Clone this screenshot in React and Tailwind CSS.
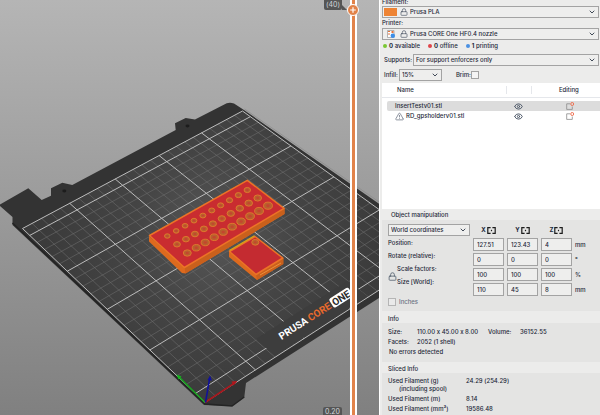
import React, { useState } from 'react';
import clsx from 'clsx';
import { ChevronDown, Eye, Lock, TriangleAlert } from 'lucide-react';

// Screen positions of the print surface corners, and its size in mm
const CORNERS = { p00: [205, 402.5], p10: [438, 252], p11: [242.5, 111], p01: [22.5, 228.5] };
const BED = { minX: 0, maxX: 250, minY: -10, maxY: 210 };

function makeProjection({ p00, p10, p11, p01 }) {
  const dx1 = p10[0] - p11[0], dx2 = p01[0] - p11[0], sx = p00[0] - p10[0] + p11[0] - p01[0];
  const dy1 = p10[1] - p11[1], dy2 = p01[1] - p11[1], sy = p00[1] - p10[1] + p11[1] - p01[1];
  const det = dx1 * dy2 - dx2 * dy1;
  const g = (sx * dy2 - dx2 * sy) / det;
  const h = (dx1 * sy - sx * dy1) / det;
  return (x, y) => {
    const u = (x - BED.minX) / (BED.maxX - BED.minX);
    const v = (y - BED.minY) / (BED.maxY - BED.minY);
    const w = g * u + h * v + 1;
    const px = ((p10[0] - p00[0] + g * p10[0]) * u + (p01[0] - p00[0] + h * p01[0]) * v + p00[0]) / w;
    const py = ((p10[1] - p00[1] + g * p10[1]) * u + (p01[1] - p00[1] + h * p01[1]) * v + p00[1]) / w;
    return `${px.toFixed(2)} ${py.toFixed(2)}`;
  };
}

const project = makeProjection(CORNERS);
const line = (x1, y1, x2, y2) => `M${project(x1, y1)}L${project(x2, y2)}`;
const quad = (x1, y1, x2, y2) =>
  `M${project(x1, y1)}L${project(x2, y1)}L${project(x2, y2)}L${project(x1, y2)}Z`;

let minorGrid = '';
let majorGrid = '';
for (let x = 10; x < 250; x += 10) {
  if (x % 50) minorGrid += line(x, -10, x, 210);
  else majorGrid += line(x, -10, x, 210);
}
for (let y = 0; y < 210; y += 10) {
  if (y % 50) minorGrid += line(0, y, 250, y);
  else majorGrid += line(0, y, 250, y);
}

const HOLE_ROWS = [
  { from: [167.3, 236], to: [247.3, 190], r: 2.8 },
  { from: [177, 244.3], to: [257.7, 198], r: 3.4 },
  { from: [187.3, 253], to: [268, 205.7], r: 4 },
];

const holes = HOLE_ROWS.flatMap(({ from, to, r }) =>
  Array.from({ length: 10 }, (_, i) => ({
    cx: from[0] + ((to[0] - from[0]) * i) / 9,
    cy: from[1] + ((to[1] - from[1]) * i) / 9,
    r: r + i * 0.05,
  }))
);

function Hole({ cx, cy, r }) {
  return (
    <g>
      <ellipse cx={cx} cy={cy} rx={r} ry={r * 0.8} fill="#b8602d" stroke="#e27a2e" strokeWidth="0.9" />
      <ellipse cx={cx} cy={cy} rx={r * 0.4} ry={r * 0.3} fill="#c4452e" />
    </g>
  );
}

function Scene() {
  return (
    <svg className="block h-full w-full" viewBox="0 0 379 415" preserveAspectRatio="xMinYMin slice">
      <defs>
        <linearGradient id="sky" x1="0" y1="0" x2="0" y2="1">
          <stop offset="0" stopColor="#b5b5b5" />
          <stop offset="1" stopColor="#808080" />
        </linearGradient>
        <radialGradient id="sheet" gradientUnits="userSpaceOnUse" cx="215" cy="235" r="170">
          <stop offset="0" stopColor="#575757" />
          <stop offset="0.5" stopColor="#444" />
          <stop offset="1" stopColor="#3b3b3b" />
        </radialGradient>
      </defs>
      <rect width="379" height="415" fill="url(#sky)" />

      {/* Heatbed body */}
      <path
        d="M0 204.5L28.3 188.3L41.7 200L51 195.7V188.3L62.3 182.7L72.3 185L175.7 130L175 123.3L185.7 118L195 119.5L226.7 103.3Q230 102 234 103.5L244 110L440 246V259L246 383L244.3 397L232 406L204 405L12.5 225V217L0 206Z"
        fill="#333"
      />
      <path d="M12.5 223L205 404L232 406L244.3 397" fill="none" stroke="#242424" strokeWidth="1.5" />
      <ellipse cx="64.3" cy="191" rx="2" ry="1.4" fill="#1c1c1c" />
      <ellipse cx="187.5" cy="126" rx="2" ry="1.4" fill="#1c1c1c" />
      <path d="M244.5 109L440 244" stroke="#8a8a8a" strokeWidth="0.7" />

      {/* Print surface */}
      <path d={quad(0, -10, 250, 210)} fill="url(#sheet)" />
      <path d={minorGrid} stroke="#6c6c6c" strokeWidth="0.6" fill="none" />
      <path d={majorGrid} stroke="#bcbcbc" strokeWidth="1" fill="none" />
      <path d={quad(71, -9, 170, 11)} fill="#3d3d3d" />
      <path d={quad(0, -10, 250, 210)} stroke="#bcbcbc" strokeWidth="1" fill="none" />

      <g transform="translate(281.5 340) rotate(-32.5)" fontFamily="Roboto, Arial, sans-serif" fontSize="10" fontWeight="700">
        <text x="0" y="0" fill="#fff">PRUSA</text>
        <text x="34.500" y="0" fill="#ea6a2c">CORE</text>
        <rect x="61.500" y="-9" width="23" height="10.5" rx="2" fill="#fff" />
        <text x="63" y="0" fill="#2b2b2b">ONE</text>
      </g>

      {/* Large part */}
      <path d="M149 236L184.500 267L284.500 208V214L185.500 273.500L182 273L149 241.500Z" fill="#dd6a1e" />
      <path d="M184.500 267L284.500 208V214L185.500 273.500Z" fill="#c9601c" />
      <path d="M149.500 235.500L247.300 180.300L284 208.300L184.400 267.500Z" fill="#c92c30" stroke="#ec7326" strokeWidth="1.500" strokeLinejoin="round" />
      {holes.map((hole, i) => (
        <Hole key={i} {...hole} />
      ))}

      {/* Small part */}
      <path d="M229 251.500L256 274.500L283.300 258V264L257 280L229 257Z" fill="#dd6a1e" />
      <path d="M256 274.500L283.300 258V264L257 280Z" fill="#c9601c" />
      <path d="M229.500 251.500L255 236.500L282.800 258L256 274.500Z" fill="#c42b31" stroke="#ec7326" strokeWidth="1.500" strokeLinejoin="round" />
      <path d="M229.500 250.500L254.500 235.700" stroke="#d9a514" strokeWidth="1.200" />
      <path d="M260 275L281 263" stroke="#ffae4d" strokeWidth="0.6" />
      <Hole cx={255.3} cy={242.3} r={3.6} />

      {/* Axes */}
      <g fill="none" strokeWidth="1.500">
        <path d="M205 402.500L179 377" stroke="#16a51d" />
        <path d="M205 402.500L234.500 383" stroke="#a8161c" />
        <path d="M205.500 402.500L209.500 379" stroke="#10109c" />
      </g>
      <path d="M176.500 374.500L181.500 376.500L178.500 379.500Z" fill="#12b51b" />
      <path d="M237.500 381L233.500 385.500L231.500 381.500Z" fill="#b0161c" />
      <path d="M210 375.500L212 380.500L207.500 380Z" fill="#10109c" />
    </svg>
  );
}

function LayerSlider() {
  const [layer, setLayer] = useState(40);
  return (
    <div className="absolute inset-y-0 right-[19px] w-[14px]">
      <div className="mx-auto h-full w-[7px] border-x-2 border-white bg-[#e2834a]" />
      <input
        type="range"
        aria-label="Layer"
        min="1"
        max="40"
        value={layer}
        onChange={e => setLayer(Number(e.target.value))}
        className="absolute inset-x-0 top-1 h-full w-full appearance-none bg-transparent [direction:rtl] [writing-mode:vertical-lr] [&::-webkit-slider-thumb]:size-3 [&::-webkit-slider-thumb]:appearance-none [&::-webkit-slider-thumb]:rounded-full [&::-webkit-slider-thumb]:border [&::-webkit-slider-thumb]:border-white [&::-webkit-slider-thumb]:bg-[#e2834a]"
      />
      <svg className="pointer-events-none absolute top-1 left-px size-3" viewBox="0 0 12 12">
        <path d="M6 3.200V8.800M3.200 6H8.800" stroke="#fff" strokeWidth="1.200" />
      </svg>
      <div className="absolute top-0 right-[18px] h-[10px] rounded-b-xs bg-[#555] px-[2px] text-[7px] leading-[10px] text-gray-300">
        (40)
      </div>
      <svg className="absolute top-[5px] right-[13px] h-[5px] w-[5px]" viewBox="0 0 5 5">
        <path d="M0 0L5 5H0Z" fill="#555" />
      </svg>
      <div className="absolute right-[18px] -bottom-[2px] h-[10px] rounded-xs bg-[#555] px-[2px] text-[7px] leading-[10px] text-gray-300">
        0.20
      </div>
    </div>
  );
}

function Dropdown({ id, label, value, icons, className }) {
  return (
    <div className={clsx('relative flex h-3 items-center border border-[#a3a3a3] bg-[#eeeeed]', className)}>
      {icons}
      <select id={id} aria-label={label} className="h-full min-w-0 flex-1 appearance-none bg-transparent pr-3 pl-[2px] outline-none">
        <option>{value}</option>
      </select>
      <ChevronDown className="pointer-events-none absolute right-[2px] size-2" strokeWidth={2.5} />
    </div>
  );
}

function PrinterIcon() {
  return (
    <svg className="ml-1 size-2 shrink-0" viewBox="0 0 8 8">
      <path d="M0.500 0.500H7V7.500H0.500Z" fill="#fff" stroke="#888" strokeWidth="0.6" />
      <path d="M1 1.500H3M1 4H3" stroke="#e8743a" strokeWidth="1.200" />
      <path d="M4.500 1H6.500V3H4.500Z" fill="#e8743a" />
      <circle cx="5.800" cy="5.800" r="2.200" fill="#3d8fe8" />
    </svg>
  );
}

function EditIcon() {
  return (
    <svg className="size-2" viewBox="0 0 8 8" fill="none">
      <path d="M4 1.800H0.700V7.400H6.300V4.500" stroke="#8a8a8a" strokeWidth="0.8" />
      <circle cx="6.200" cy="2" r="1.500" stroke="#ee6a4a" strokeWidth="0.900" />
    </svg>
  );
}

function MirrorIcon() {
  return (
    <svg className="h-[7px] w-[9px]" viewBox="0 0 9 7" fill="none" stroke="#1c1c1c">
      <path d="M3.600 0.700H0.800V6.300H3.600M5.400 0.700H8.200V6.300H5.400" strokeWidth="1.200" />
      <path d="M4.500 2.800V4.200" strokeWidth="1.200" />
    </svg>
  );
}

const PRINTER_STATUS = [
  { count: 0, label: 'available', dot: 'bg-[#7ac832]' },
  { count: 0, label: 'offline', dot: 'bg-[#e0454a]' },
  { count: 1, label: 'printing', dot: 'bg-[#4a90e2]' },
];

const OBJECTS = [
  { name: 'InsertTestv01.stl', selected: true, warning: false },
  { name: 'RD_gpsholderv01.stl', selected: false, warning: true },
];

const TRANSFORMS = [
  { label: 'Position', values: ['127.51', '123.43', '4'], unit: 'mm' },
  { label: 'Rotate (relative)', values: ['0', '0', '0'], unit: '°' },
  { label: 'Scale factors', values: ['100', '100', '100'], unit: '%' },
  { label: 'Size [World]', values: ['110', '45', '8'], unit: 'mm' },
];

const AXES = ['X', 'Y', 'Z'];

function PrintSettings() {
  return (
    <section className="pr-px pl-[2px]">
      <label htmlFor="filament" className="-mt-[2px] block h-[7px] leading-[7px]">Filament:</label>
      <Dropdown
        id="filament"
        value="Prusa PLA"
        className="mt-px"
        icons={
          <>
            <span className="ml-px h-2 w-[13px] shrink-0 bg-[#ee8434]" />
            <Lock className="ml-[3px] size-2 shrink-0 text-gray-600" />
          </>
        }
      />
      <label htmlFor="printer" className="mt-px block h-2 leading-[8px]">Printer:</label>
      <Dropdown
        id="printer"
        value="Prusa CORE One HF0.4 nozzle"
        className="mt-px"
        icons={
          <>
            <PrinterIcon />
            <Lock className="ml-[5px] size-2 shrink-0 text-gray-600" />
          </>
        }
      />
      <div className="flex h-3 items-center gap-2 pl-px">
        {PRINTER_STATUS.map(s => (
          <div key={s.label} className="flex items-center gap-[2px]">
            <span className={clsx('size-1 rounded-full', s.dot)} />
            <span><b>{s.count}</b> {s.label}</span>
          </div>
        ))}
      </div>
      <div className="mt-[2px] flex items-center gap-px pl-[2px]">
        <label htmlFor="supports">Supports:</label>
        <Dropdown id="supports" value="For support enforcers only" className="flex-1" />
      </div>
      <div className="mt-[3px] flex items-center pl-[2px]">
        <label htmlFor="infill" className="mr-px">Infill:</label>
        <Dropdown id="infill" value="15%" className="w-[43px]" />
        <label htmlFor="brim" className="ml-[14px]">Brim:</label>
        <input id="brim" type="checkbox" className="size-2 appearance-none border border-[#a3a3a3] bg-[#f4f4f4]" />
      </div>
    </section>
  );
}

function ObjectList() {
  return (
    <div className="mt-[2px] ml-[2px] h-[126px] bg-white">
      <table className="w-full table-fixed border-separate border-spacing-0 text-left">
        <thead>
          <tr className="h-[15px]">
            <th className="border-b border-gray-200 pl-[15px] font-medium">Name</th>
            <th className="w-[26px] border-b border-gray-200">
              <span className="block h-2 border-x border-gray-200" />
            </th>
            <th className="w-[68px] border-b border-gray-200 pl-[27px] font-medium">Editing</th>
          </tr>
          <tr className="h-[3px]" />
        </thead>
        <tbody>
          {OBJECTS.map(o => (
            <tr key={o.name} className="h-[10px]">
              <td className="p-0 pl-[5px]">
                <div className={clsx('flex h-[10px] items-center gap-[2px] rounded-l-xs pl-2', o.selected && 'bg-[#dcdcdc]')}>
                  {o.warning && <TriangleAlert className="size-[9px] text-gray-500" />}
                  {o.name}
                </div>
              </td>
              <td className={clsx('p-0', o.selected && 'bg-[#dcdcdc]')}>
                <Eye className="ml-2 size-[9px] text-gray-600" strokeWidth={2.5} />
              </td>
              <td className={clsx('p-0 pl-[34px]', o.selected && 'bg-[#dcdcdc]')}>
                <EditIcon />
              </td>
            </tr>
          ))}
        </tbody>
      </table>
    </div>
  );
}

function ObjectManipulation() {
  return (
    <section>
      <h2 className="mt-[2px] h-2 pl-[11px]">Object manipulation</h2>
      <div className="mt-px ml-[2px] bg-[#e4e4e3] pt-1 pb-[5px] pl-[6px]">
        <div className="grid grid-cols-[82px_31px_31px_31px_12px] items-center gap-x-[3px] gap-y-[2px]">
          <Dropdown label="Coordinates" value="World coordinates" />
          {AXES.map(axis => (
            <div key={axis} className="flex items-center justify-center gap-px font-bold">
              <span>{axis}</span>
              <MirrorIcon />
            </div>
          ))}
          <span />
          <div className="relative row-span-4 row-start-2 flex h-full flex-col pt-px">
            {TRANSFORMS.map((t, i) => (
              <span key={t.label} className={clsx('h-[13px] leading-[8px]', i > 1 && 'pl-[9px]')}>
                {t.label}:
              </span>
            ))}
            <Lock className="absolute top-[34px] left-0 size-[9px] text-gray-600" />
          </div>
          {TRANSFORMS.map(t => (
            <React.Fragment key={t.label}>
              {t.values.map((value, i) => (
                <input
                  key={AXES[i]}
                  aria-label={`${t.label} ${AXES[i]}`}
                  defaultValue={value}
                  className="h-[13px] w-full min-w-0 border border-[#a3a3a3] bg-[#eeeeed] px-[3px] outline-none"
                />
              ))}
              <span>{t.unit}</span>
            </React.Fragment>
          ))}
        </div>
        <label className="mt-[2px] flex h-2 items-center gap-[3px] text-gray-500">
          <input type="checkbox" className="size-2 appearance-none border border-[#b5b5b5] bg-[#eaeaea]" />
          Inches
        </label>
      </div>
    </section>
  );
}

function Info() {
  return (
    <section>
      <h2 className="mt-1 h-2 pl-2">Info</h2>
      <div className="ml-[2px] bg-[#e4e4e3] px-[6px] pt-[5px] pb-[6px]">
        <dl className="grid grid-cols-[29px_71px_32px_1fr] gap-y-[2px]">
          <dt>Size:</dt>
          <dd>110.00 x 45.00 x 8.00</dd>
          <dt>Volume:</dt>
          <dd>36152.55</dd>
          <dt>Facets:</dt>
          <dd>2052 (1 shell)</dd>
        </dl>
        <p className="mt-[2px] pl-px">No errors detected</p>
      </div>
    </section>
  );
}

function SlicedInfo() {
  return (
    <section>
      <h2 className="mt-[3px] h-2 pl-2">Sliced Info</h2>
      <div className="ml-[2px] bg-[#e4e4e3] px-[6px] pt-1 pb-4">
        <dl className="grid grid-cols-[78px_1fr] gap-y-[2px]">
          <dt>
            Used Filament (g)
            <span className="block pl-[11px]">(including spool)</span>
          </dt>
          <dd>24.29 (254.29)</dd>
          <dt>Used Filament (m)</dt>
          <dd>8.14</dd>
          <dt>Used Filament (mm³)</dt>
          <dd>19586.48</dd>
        </dl>
      </div>
    </section>
  );
}

export default function App() {
  return (
    <div className="flex h-screen overflow-hidden bg-[#ececeb] font-['Inter','Liberation_Sans',sans-serif] [font-feature-settings:'calt'_0]">
      <main className="relative min-w-0 flex-1">
        <Scene />
        <LayerSlider />
      </main>
      <aside className="w-[221px] shrink-0 overflow-hidden border-l border-white text-[6px] leading-[8px] font-medium text-gray-800">
        <PrintSettings />
        <ObjectList />
        <ObjectManipulation />
        <Info />
        <SlicedInfo />
      </aside>
    </div>
  );
}
